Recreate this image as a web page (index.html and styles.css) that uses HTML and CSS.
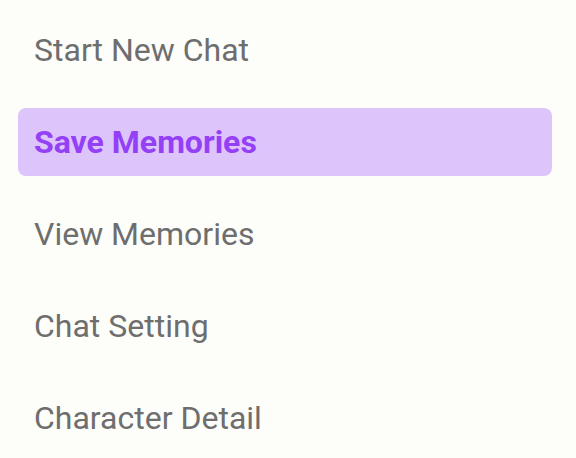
FILE: index.html
```html
<!DOCTYPE html>
<html lang="en">
<head>
<meta charset="utf-8">
<link rel="stylesheet" href="styles.css">
</head>
<body>
<nav class="menu">
  <div class="item">Start New Chat</div>
  <div class="item active">Save Memories</div>
  <div class="item">View Memories</div>
  <div class="item">Chat Setting</div>
  <div class="item">Character Detail</div>
</nav>
</body>
</html>
```
FILE: styles.css
```css
html, body {
  margin: 0;
  padding: 0;
  background: #fdfdf9;
}
body {
  font-family: Roboto, "Noto Sans", sans-serif;
}
.menu {
  display: flex;
  flex-direction: column;
  gap: 24px;
  padding: 16px 24px 0 18px;
}
.item {
  height: 68px;
  display: flex;
  align-items: center;
  padding: 0 16px;
  border-radius: 8px;
  font-size: 32px;
  color: #6e6e6e;
}
.item.active {
  background: #ddc4fa;
  color: #9440f6;
  font-weight: 700;
}
```
